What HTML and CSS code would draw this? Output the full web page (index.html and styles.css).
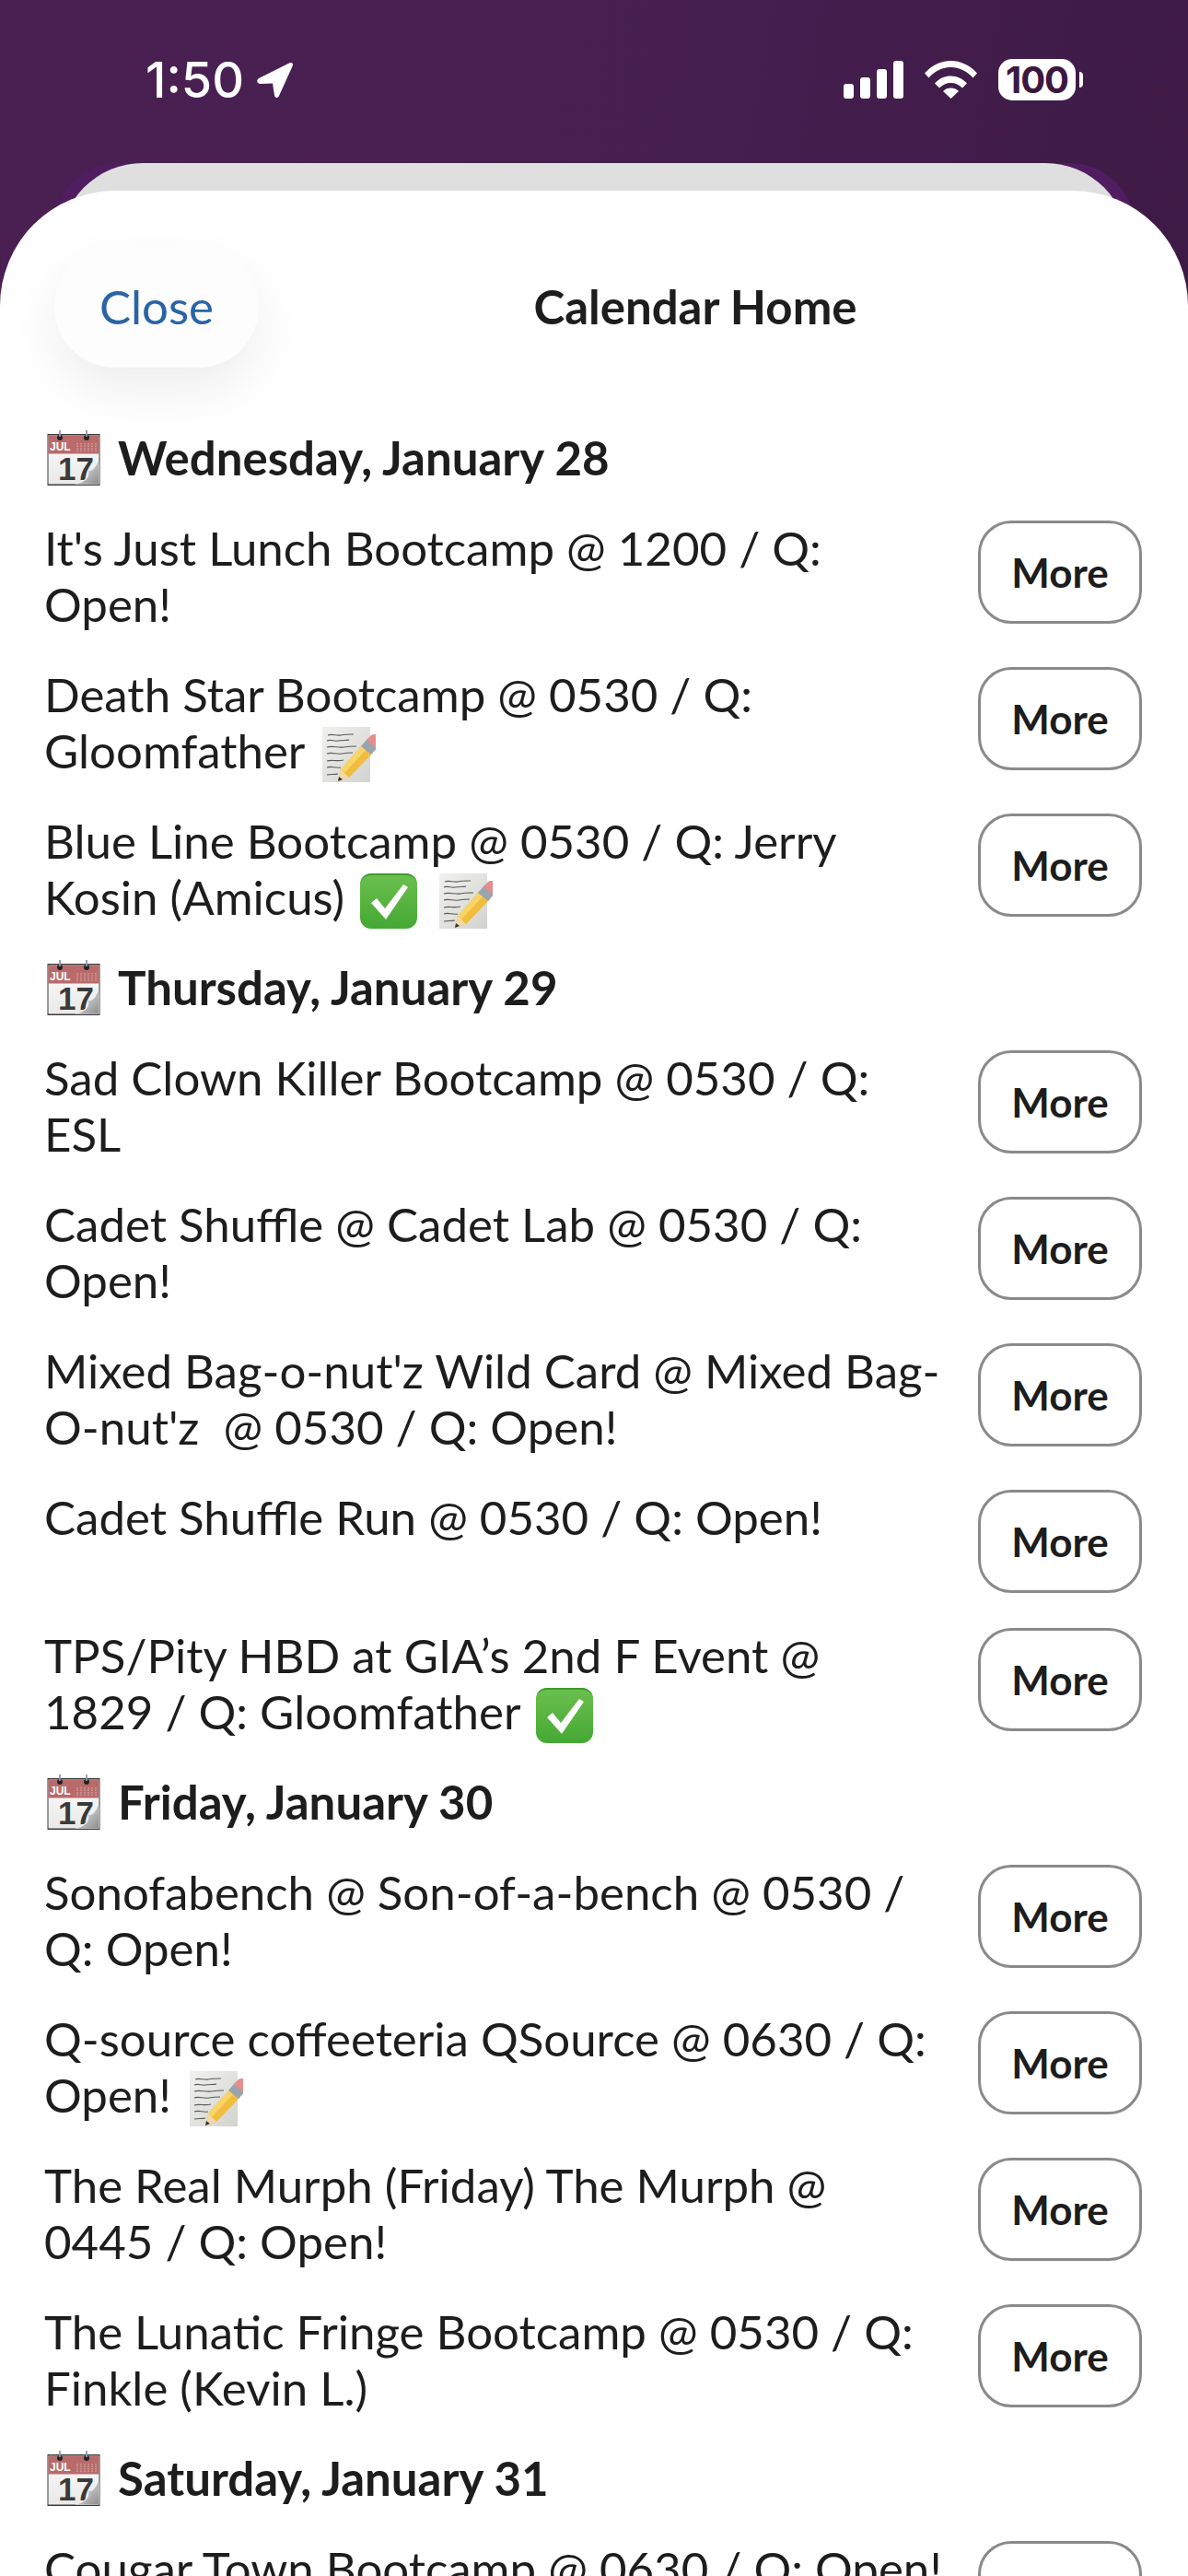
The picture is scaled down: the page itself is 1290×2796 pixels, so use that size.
FILE: index.html
```html
<html>
    <head>
        <title>Calendar Home</title>
        <link rel="stylesheet" href="styles.css">
    </head>
    <body>
        <svg class="defs" width="0" height="0">
            <defs>
                <linearGradient id="pageGrad" x1="0" y1="0" x2="0" y2="1">
                    <stop offset="0" stop-color="#fbfbfb"/>
                    <stop offset="1" stop-color="#e9e9e9"/>
                </linearGradient>
                <linearGradient id="memoGrad" x1="0" y1="0" x2="1" y2="1">
                    <stop offset="0" stop-color="#f1f1ef"/>
                    <stop offset="1" stop-color="#d2d2ce"/>
                </linearGradient>
                <linearGradient id="checkGrad" x1="0" y1="0" x2="0" y2="1">
                    <stop offset="0" stop-color="#6cc04e"/>
                    <stop offset="1" stop-color="#45a834"/>
                </linearGradient>
                <linearGradient id="curlGrad" x1="0" y1="0" x2="1" y2="1">
                    <stop offset="0" stop-color="#f4f4f4"/>
                    <stop offset="1" stop-color="#8c8c8c"/>
                </linearGradient>
                <symbol id="calendar" viewBox="0 0 58 60">
                    <rect x="0.5" y="4" width="57" height="56" fill="#3c3c3c"/>
                    <rect x="1.5" y="5.5" width="55" height="53" fill="url(#pageGrad)"/>
                    <rect x="1.5" y="5.5" width="55" height="20" fill="#b96b6b"/>
                    <text x="3" y="22" class="cal-month">JUL</text>
                    <path d="M33 14v9M37 14v9M41 14v9M45 14v9M49 14v9M53 14v9" stroke="#d9a3a3" stroke-width="1.4" stroke-dasharray="1.5 1"/>
                    <circle cx="14" cy="8" r="3" fill="#222"/>
                    <circle cx="43" cy="8" r="3" fill="#222"/>
                    <path d="M14 0v7M43 0v7" stroke="#8f9bb0" stroke-width="1.8"/>
                    <text x="12" y="54" class="cal-day">17</text>
                    <path d="M30 58.500C42 56 50 45 56 33c1 9 .5 17 .5 25.500z" fill="#fff"/>
                    <path d="M30 58.500C42 57 47 50 45 44c5 1 8 -4 11 -11c1 9 .5 17 .5 25.500z" fill="url(#curlGrad)"/>
                </symbol>
                <symbol id="memo" viewBox="0 0 58 60">
                    <rect x="0" y="0" width="52" height="60" fill="url(#memoGrad)"/>
                    <path d="M6 9c5-2 9 1 14 0s10-1 14-1M5 15c4-2 8 1 12 0s10 0 12-1M5 22c6-2 12 1 18 0s10-1 14-1M5 29c5-2 10 1 16 0s8-1 12-1M5 37c6-2 10 1 18-1M5 44c5-2 9 1 15 0M5 52c4-1 8 0 12-1" fill="none" stroke="#5a5a5a" stroke-width="1.1"/>
                    <path d="M17 59l3-13L44 19l11 9-26 27z" fill="#f0bd3e"/>
                    <path d="M20 46L44 19l5 4-25 27z" fill="#f8d566"/>
                    <path d="M17 59l3-13 9 9z" fill="#efd9a8"/>
                    <path d="M17 59l1-5 4 3z" fill="#333"/>
                    <path d="M42 21l7-8 11 9-7 8z" fill="#9ba4ad"/>
                    <path d="M48 14l5-5c3-2 6-1 8 2 2 2 2 5 0 7l-4 4z" fill="#e58e8e"/>
                </symbol>
                <symbol id="check" viewBox="0 0 62 60">
                    <rect x="0" y="0" width="62" height="60" rx="12" fill="url(#checkGrad)"/>
                    <path d="M0 12A12 12 0 0 1 12 0h38a12 12 0 0 1 12 12a12 10 0 0 0-12-10H12A12 10 0 0 0 0 12z" fill="#3f9c30"/>
                    <path d="M12 32l6-5 9 11L47 12l5 3-24 35z" fill="#fff"/>
                </symbol>
            </defs>
        </svg>

        <div class="status-bar">
            <div class="status-left">
                <span class="time">1:50</span>
                <svg class="arrow" viewBox="0 0 40 40"><path d="M2 18 L35 1.500 C38 0 40 2 38.500 5 L24 37 C22.500 40 19.500 39.500 19 36.500 L17 23.500 L3.500 24 C0 24 -1 20 2 18z" fill="#fff"/></svg>
            </div>
            <div class="status-right">
                <svg class="signal" viewBox="0 0 65 41">
                    <rect x="0" y="25" width="11" height="16" rx="3" fill="#fff"/>
                    <rect x="18" y="18" width="11" height="23" rx="3" fill="#fff"/>
                    <rect x="36" y="9" width="11" height="32" rx="3" fill="#fff"/>
                    <rect x="54" y="0" width="11" height="41" rx="3" fill="#fff"/>
                </svg>
                <svg class="wifi" viewBox="0 0 57 41">
                    <path d="M0 13.500C8 4.500 18 0 28.500 0S49 4.500 57 13.500L52.500 18.500C45.500 11 37.500 7 28.500 7S11.500 11 4.500 18.500z" fill="#fff"/>
                    <path d="M11 24.500C15.500 19.500 21.500 16.500 28.500 16.500S41.500 19.500 46 24.500L41 29.500C37.500 26 33.500 24 28.500 24S19.500 26 16 29.500z" fill="#fff"/>
                    <path d="M20 33C22.500 30.500 25 29.500 28.500 29.500S34.500 30.500 37 33L28.500 41z" fill="#fff"/>
                </svg>
                <div class="battery">
                    <span class="battery-body">100</span>
                    <span class="battery-cap"></span>
                </div>
            </div>
        </div>

        <div class="sheet-stack">
            <div class="back-tint"></div>
            <div class="back-sheet"></div>
            <div class="sheet">
                <div class="sheet-header">
                    <div class="close-btn">Close</div>
                    <div class="sheet-title">Calendar Home</div>
                </div>
                <div class="list">
                    <div class="day"><svg class="emoji-cal"><use href="#calendar"/></svg>Wednesday, January 28</div>
                    <div class="row">
                        <div class="row-text">It's Just Lunch Bootcamp @ 1200 / Q: Open!</div>
                        <div class="more-btn">More</div>
                    </div>
                    <div class="row">
                        <div class="row-text">Death Star Bootcamp @ 0530 / Q: Gloomfather <svg class="emoji-memo"><use href="#memo"/></svg></div>
                        <div class="more-btn">More</div>
                    </div>
                    <div class="row">
                        <div class="row-text">Blue Line Bootcamp @ 0530 / Q: Jerry Kosin (Amicus) <svg class="emoji-check"><use href="#check"/></svg> <svg class="emoji-memo after-check"><use href="#memo"/></svg></div>
                        <div class="more-btn">More</div>
                    </div>
                    <div class="day"><svg class="emoji-cal"><use href="#calendar"/></svg>Thursday, January 29</div>
                    <div class="row">
                        <div class="row-text">Sad Clown Killer Bootcamp @ 0530 / Q: ESL</div>
                        <div class="more-btn">More</div>
                    </div>
                    <div class="row">
                        <div class="row-text">Cadet Shuffle @ Cadet Lab @ 0530 / Q: Open!</div>
                        <div class="more-btn">More</div>
                    </div>
                    <div class="row">
                        <div class="row-text">Mixed Bag-o-nut'z Wild Card @ Mixed Bag-O-nut'z &nbsp;@ 0530 / Q: Open!</div>
                        <div class="more-btn">More</div>
                    </div>
                    <div class="row">
                        <div class="row-text">Cadet Shuffle Run @ 0530 / Q: Open!</div>
                        <div class="more-btn">More</div>
                    </div>
                    <div class="row">
                        <div class="row-text">TPS/Pity HBD at GIA’s 2nd F Event @<br>1829 / Q: Gloomfather <svg class="emoji-check"><use href="#check"/></svg></div>
                        <div class="more-btn">More</div>
                    </div>
                    <div class="day"><svg class="emoji-cal"><use href="#calendar"/></svg>Friday, January 30</div>
                    <div class="row">
                        <div class="row-text">Sonofabench @ Son-of-a-bench @ 0530 / Q: Open!</div>
                        <div class="more-btn">More</div>
                    </div>
                    <div class="row">
                        <div class="row-text">Q-source coffeeteria QSource @ 0630 / Q: Open! <svg class="emoji-memo"><use href="#memo"/></svg></div>
                        <div class="more-btn">More</div>
                    </div>
                    <div class="row">
                        <div class="row-text">The Real Murph (Friday) The Murph @<br>0445 / Q: Open!</div>
                        <div class="more-btn">More</div>
                    </div>
                    <div class="row">
                        <div class="row-text">The Lunatic Fringe Bootcamp @ 0530 / Q: Finkle (Kevin L.)</div>
                        <div class="more-btn">More</div>
                    </div>
                    <div class="day"><svg class="emoji-cal"><use href="#calendar"/></svg>Saturday, January 31</div>
                    <div class="row">
                        <div class="row-text">Cougar Town Bootcamp @ 0630 / Q: Open!</div>
                        <div class="more-btn">More</div>
                    </div>
                </div>
            </div>
        </div>
    </body>
</html>
```

FILE: styles.css
```css
html {
    height: 2796px;
    overflow: hidden;
}
body {
    margin: 0;
    height: 2796px;
    overflow: hidden;
    font-family: "Lato", "Liberation Sans", sans-serif;
    color: #1d1d1d;
    background: linear-gradient(100deg, #4a2052 0%, #451f4f 45%, #37163c 100%);
}
.defs {
    position: absolute;
}
.cal-month {
    font-family: "Liberation Sans", sans-serif;
    font-size: 12px;
    fill: #fff;
}
.cal-day {
    font-family: "Liberation Sans", sans-serif;
    font-size: 35px;
    fill: #3a3a3a;
}
.status-bar {
    height: 177px;
    box-sizing: border-box;
    padding: 64px 114px 0 158px;
    display: flex;
    justify-content: space-between;
    align-items: flex-start;
}
.status-left {
    display: flex;
    align-items: center;
    gap: 14px;
    height: 45px;
}
.time {
    font-family: "Inter", sans-serif;
    font-size: 54px;
    font-weight: 500;
    color: #fff;
    line-height: 45px;
}
.arrow {
    width: 40px;
    height: 40px;
}
.status-right {
    display: flex;
    align-items: center;
    height: 45px;
}
.signal {
    width: 65px;
    height: 41px;
    margin-right: 23px;
}
.wifi {
    width: 57px;
    height: 41px;
    margin-right: 23px;
}
.battery {
    display: flex;
    align-items: center;
    gap: 4px;
}
.battery-body {
    width: 84px;
    height: 45px;
    border-radius: 15px;
    background: #fff;
    color: #3c1840;
    font-family: "Inter", sans-serif;
    font-size: 40px;
    font-weight: 700;
    letter-spacing: -1px;
    line-height: 45px;
    text-align: center;
}
.battery-cap {
    width: 4px;
    height: 17px;
    background: #fff;
    border-radius: 0 4px 4px 0;
}
.sheet-stack {
    position: relative;
    padding-top: 30px;
}
.back-tint {
    position: absolute;
    top: 0;
    left: 58px;
    right: 58px;
    height: 200px;
    background: #4f1d60;
    border-radius: 70px 70px 0 0;
}
.back-sheet {
    position: absolute;
    top: 0;
    left: 65px;
    right: 65px;
    height: 200px;
    background: #dfdfdf;
    border-radius: 90px 90px 0 0;
}
.sheet {
    position: relative;
    background: #fff;
    border-radius: 125px 125px 0 0;
    padding: 60px 50px 0 48px;
}
.sheet-header {
    display: flex;
    align-items: center;
    margin-left: 11px;
    margin-right: 11px;
    height: 132px;
}
.close-btn {
    width: 222px;
    height: 132px;
    border-radius: 66px;
    background: #fdfdfd;
    box-shadow: 0 24px 56px rgba(0, 0, 0, 0.07);
    color: #2a64a6;
    font-size: 51px;
    line-height: 132px;
    text-align: center;
}
.sheet-title {
    flex: 1;
    text-align: center;
    font-size: 51px;
    font-weight: 700;
    padding-bottom: 2px;
}
.list {
    display: flex;
    flex-direction: column;
    gap: 38px;
    margin-top: 68px;
}
.day {
    display: flex;
    align-items: center;
    gap: 19px;
    height: 60px;
    font-size: 51px;
    line-height: 58px;
    font-weight: 700;
}
.emoji-cal {
    width: 58px;
    height: 60px;
    margin-left: 3px;
    flex: none;
}
.row {
    display: flex;
    justify-content: space-between;
    align-items: flex-start;
    gap: 34px;
}
.row-text {
    flex: 1;
    font-size: 51px;
    line-height: 60.500px;
}
.more-btn {
    flex: none;
    box-sizing: border-box;
    width: 178px;
    height: 112px;
    border: 3px solid #8a8a8a;
    border-radius: 36px;
    font-size: 44px;
    font-weight: 700;
    line-height: 106px;
    text-align: center;
}
.emoji-memo {
    width: 58px;
    height: 60px;
    vertical-align: -10px;
    margin-bottom: -5px;
    margin-left: 7px;
}
.emoji-memo.after-check {
    margin-left: 11px;
}
.emoji-check {
    width: 62px;
    height: 60px;
    vertical-align: -10px;
    margin-bottom: -5px;
    margin-left: 4px;
}
```
